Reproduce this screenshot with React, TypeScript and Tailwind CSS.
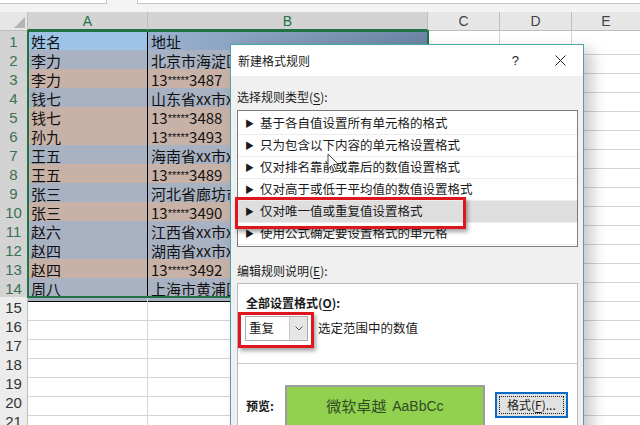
import React from 'react';

const CJK = { fontFamily: '"Noto Sans CJK SC", "Noto Sans", sans-serif' };

// g = 蓝灰, t = 棕色
const rows: [string, string, 'g' | 't'][] = [
  ['李力', '北京市海淀区xx路', 'g'],
  ['李力', '13*****3487', 't'],
  ['钱七', '山东省xx市xx区', 'g'],
  ['钱七', '13*****3488', 't'],
  ['孙九', '13*****3493', 't'],
  ['王五', '海南省xx市xx区', 'g'],
  ['王五', '13*****3489', 't'],
  ['张三', '河北省廊坊市', 'g'],
  ['张三', '13*****3490', 't'],
  ['赵六', '江西省xx市xx区', 'g'],
  ['赵四', '湖南省xx市xx区', 'g'],
  ['赵四', '13*****3492', 't'],
  ['周八', '上海市黄浦区', 'g'],
];

const ruleTypes = [
  '基于各自值设置所有单元格的格式',
  '只为包含以下内容的单元格设置格式',
  '仅对排名靠前或靠后的数值设置格式',
  '仅对高于或低于平均值的数值设置格式',
  '仅对唯一值或重复值设置格式',
  '使用公式确定要设置格式的单元格',
];

function Cell({ text, bg }: { text: string; bg: string }) {
  // 手机号中间的星号显示得小一些
  const parts = text.split(/(\*+)/);
  return (
    <div className={`flex items-center overflow-hidden whitespace-nowrap border-r border-b border-black pl-[3px] text-[15px] text-[#111] ${bg}`}>
      {parts.map((p, i) =>
        p.startsWith('*') ? (
          <span key={i} className="text-[11px]" style={{ fontFamily: '"Liberation Sans", sans-serif' }}>{p}</span>
        ) : (
          <span key={i}>{p}</span>
        )
      )}
    </div>
  );
}

function Sheet() {
  const empty = Array.from({ length: 7 }, (_, i) => i + 15);
  return (
    <div className="flex flex-col" style={CJK}>
      {/* 编辑栏 */}
      <div className="flex h-[12px] items-start gap-[30px] bg-[#f3f3f3]">
        <div className="h-[4px] w-[107px] border-b border-r border-[#c6c6c6] bg-white" />
        <div className="h-[4px] flex-1 border-b border-l border-[#c6c6c6] bg-white" />
      </div>
      {/* 列标 */}
      <div className="grid h-[19px] grid-cols-[28px_120px_280px_72px_72px_1fr] bg-[#e6e6e6] text-[14px] leading-none" style={{ fontFamily: '"Liberation Sans", sans-serif' }}>
        <div className="relative border-r border-b border-[#bdbdbd]">
          <div className="absolute right-[2px] bottom-[2px] h-0 w-0 border-l-[11px] border-t-[11px] border-l-transparent border-t-transparent border-r-0 border-b-[11px] border-b-[#b4b4b4]" />
        </div>
        <div className="flex items-center justify-center border-r border-b-2 border-r-[#bdbdbd] border-b-[#217346] bg-[#d3d3d3] text-[#217346]">A</div>
        <div className="flex items-center justify-center border-r border-b-2 border-r-[#bdbdbd] border-b-[#217346] bg-[#d3d3d3] text-[#217346]">B</div>
        <div className="flex items-center justify-center border-r border-b border-[#bdbdbd] text-[#444]">C</div>
        <div className="flex items-center justify-center border-r border-b border-[#bdbdbd] text-[#444]">D</div>
        <div className="flex items-center justify-center border-b border-[#bdbdbd] text-[#444]">E</div>
      </div>
      {/* 表头行 */}
      <div className="grid h-[19px] grid-cols-[28px_120px_280px_72px_72px_1fr]">
        <div className="flex items-center justify-center border-r border-b border-[#bdbdbd] bg-[#d3d3d3] text-[15px] text-[#3d6f55]" style={{ fontFamily: '"Liberation Sans", sans-serif' }}>1</div>
        <Cell text="姓名" bg="bg-[#9dc3e6]" />
        <Cell text="地址" bg="bg-gradient-to-r from-[#9ab2cf] to-[#6d86a5]" />
        <div className="border-r border-b border-[#d4d4d4]" />
        <div className="border-r border-b border-[#d4d4d4]" />
        <div className="border-b border-[#d4d4d4]" />
      </div>
      {rows.map(([a, b, c], i) => {
        const bg = c === 'g' ? 'bg-[#a9b2c2]' : 'bg-[#c8b2a7]';
        return (
          <div key={i} className="grid h-[19px] grid-cols-[28px_120px_280px_72px_72px_1fr]">
            <div className="flex items-center justify-center border-r border-b border-[#bdbdbd] bg-[#d3d3d3] text-[15px] text-[#3d6f55]" style={{ fontFamily: '"Liberation Sans", sans-serif' }}>{i + 2}</div>
            <Cell text={a} bg={bg} />
            <Cell text={b} bg={bg} />
            <div className="border-r border-b border-[#d4d4d4]" />
            <div className="border-r border-b border-[#d4d4d4]" />
            <div className="border-b border-[#d4d4d4]" />
          </div>
        );
      })}
      {empty.map((n) => (
        <div key={n} className="grid h-[19px] grid-cols-[28px_120px_280px_72px_72px_1fr]">
          <div className="flex items-center justify-center border-r border-b border-[#bdbdbd] bg-[#ececec] text-[15px] text-[#333]" style={{ fontFamily: '"Liberation Sans", sans-serif' }}>{n}</div>
          <div className="border-r border-b border-[#d4d4d4]" />
          <div className="border-r border-b border-[#d4d4d4]" />
          <div className="border-r border-b border-[#d4d4d4]" />
          <div className="border-r border-b border-[#d4d4d4]" />
          <div className="border-b border-[#d4d4d4]" />
        </div>
      ))}
    </div>
  );
}

function U({ k }: { k: string }) {
  return (
    <>
      (<span className="underline underline-offset-2">{k}</span>)
    </>
  );
}

function Dialog() {
  return (
    <div
      className="absolute top-[44px] left-[230px] flex h-[390px] w-[354px] flex-col border border-[#4aa3a8] bg-[#f0f0f0] text-[12px] text-[#1a1a1a] shadow-[8px_6px_14px_rgba(0,0,0,0.22)]"
      style={CJK}
    >
      {/* 标题栏 */}
      <div className="flex h-[31px] shrink-0 items-center bg-white pl-[7px]">
        <span className="text-[12px]">新建格式规则</span>
        <span className="ml-auto mr-[36px] text-[13px]" style={{ fontFamily: '"Liberation Sans", sans-serif' }}>?</span>
        <svg width="11" height="11" viewBox="0 0 11 11" className="mr-[17px]">
          <path d="M0.5 0.5L10.5 10.5M10.5 0.5L0.5 10.5" stroke="#222" strokeWidth="1" />
        </svg>
      </div>

      <div className="flex flex-col px-[6px]">
        <div className="mt-[13px] leading-[16px]">
          选择规则类型<U k="S" />:
        </div>
        {/* 规则类型列表 */}
        <div className="relative mt-[5px] h-[137px] w-[341px] border border-[#7c7c7c] bg-white py-[2px]">
          {ruleTypes.map((r, i) => (
            <div
              key={r}
              className={`flex h-[22px] items-center border-b border-[#ececec] pl-[7px] text-[12.5px] ${i === 4 ? 'bg-[#dedede]' : ''}`}
            >
              <span className="mr-[6px] text-[9px]">▶</span>
              {r}
            </div>
          ))}
          <div className="absolute top-[86px] left-[-3px] h-[32px] w-[231px] border-[3px] border-[#e0161e] shadow-[2px_3px_4px_rgba(0,0,0,0.35)]" />
          {/* 鼠标指针 */}
          <svg width="14" height="20" viewBox="0 0 14 20" className="absolute top-[42px] left-[89px]">
            <path d="M1 1L1 16L4.5 12.5L7.5 19L9.5 18L6.5 11.5L11.5 11.5Z" fill="white" stroke="#222" strokeWidth="0.8" />
          </svg>
        </div>

        <div className="mt-[16px] leading-[16px]">
          编辑规则说明<U k="E" />:
        </div>
        {/* 规则说明面板 */}
        <div className="mt-[4px] flex h-[160px] w-[341px] flex-col border border-[#b9b9b9] bg-white">
          <div className="mt-[11px] pl-[8px] font-bold leading-[16px]">
            全部设置格式<U k="O" />:
          </div>
          <div className="mt-[5px] flex items-center pl-[7px]">
            <div className="relative flex h-[25px] w-[63px] items-center border border-[#adadad] bg-white">
              <span className="pl-[3px] text-[12.5px]">重复</span>
              <div className="ml-auto flex h-full w-[18px] items-center justify-center border-l border-[#c9c9c9] bg-[#e6e6e6]">
                <svg width="8" height="5" viewBox="0 0 8 5">
                  <path d="M0.5 0.5L4 4L7.5 0.5" fill="none" stroke="#555" strokeWidth="1" />
                </svg>
              </div>
              <div className="absolute top-[-5px] left-[-8px] h-[36px] w-[76px] border-[3px] border-[#e0161e] shadow-[2px_3px_4px_rgba(0,0,0,0.35)]" />
            </div>
            <span className="ml-[10px] text-[12.5px]">选定范围中的数值</span>
          </div>
          <div className="mt-[22px] border-t border-[#c8c8c8]" />
          <div className="mt-[21px] flex items-start pl-[8px]">
            <span className="mt-[12px] font-bold">预览:</span>
            <div className="ml-[11px] flex h-[42px] w-[200px] items-center justify-center gap-[6px] border-2 border-[#9c9c9c] bg-[#92d050] text-[15px] text-[#2f4d22]">
              微软卓越
              <span className="text-[14px]" style={{ fontFamily: '"Liberation Sans", sans-serif' }}>AaBbCc</span>
            </div>
            <div className="mt-[7px] ml-[10px] flex h-[26px] w-[73px] items-center justify-center border-2 border-[#0a6cc4] bg-[#e1e1e1] p-[2px]">
              <div className="flex h-full w-full items-center justify-center border border-dotted border-[#222] text-[12px]">
                格式<U k="F" />...
              </div>
            </div>
          </div>
        </div>
      </div>
    </div>
  );
}

export default function App() {
  return (
    <div className="relative h-[425px] w-[640px] overflow-hidden bg-white">
      <Sheet />
      {/* 选区边框 */}
      <div className="absolute top-[30px] left-[27px] h-[268px] w-[402px] border-2 border-[#217346]" />
      <Dialog />
    </div>
  );
}
